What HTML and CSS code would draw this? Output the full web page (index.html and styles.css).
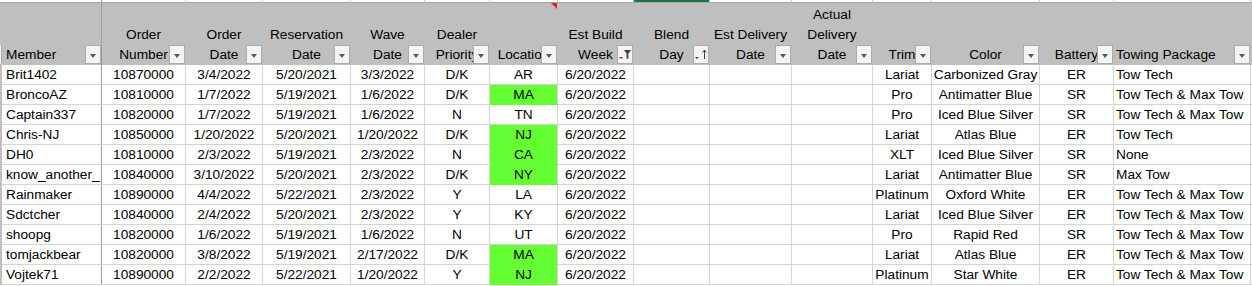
FILE: index.html
```html
<!DOCTYPE html>
<html>
<head>
<meta charset="utf-8">
<link rel="stylesheet" href="styles.css">
</head>
<body>
<div class="sheet">
  <div class="row top">
    <div class="c strip"></div><div class="c fz"></div><div class="c"></div><div class="c"></div><div class="c"></div><div class="c"></div><div class="c"></div><div class="c"></div><div class="c"></div><div class="c sel"></div><div class="c"></div><div class="c"></div><div class="c"></div><div class="c"></div><div class="c"></div><div class="c"></div><div class="c end"></div>
  </div>
  <div class="row head">
    <div class="c strip"><i class="stub"></i></div>
    <div class="c fz l"><div class="t">Member</div><i class="dd"></i></div>
    <div class="c"><div class="t">Order<br>Number</div><i class="dd"></i></div>
    <div class="c"><div class="t">Order<br>Date</div><i class="dd"></i></div>
    <div class="c"><div class="t">Reservation<br>Date</div><i class="dd"></i></div>
    <div class="c"><div class="t">Wave<br>Date</div><i class="dd"></i></div>
    <div class="c"><div class="t">Dealer<br>Priority</div><i class="dd"></i></div>
    <div class="c"><div class="t">Location</div><i class="dd"></i><i class="note"></i></div>
    <div class="c"><div class="t">Est Build<br>Week</div><i class="dd ic"><svg width="16" height="19" viewBox="0 0 16 19"><path d="M2 12h4l-2 2z" fill="#404040"/><path d="M7 5h7l-2.6 3.6v4.6l-1.8 1v-5.6z" fill="#404040"/></svg></i></div>
    <div class="c"><div class="t">Blend<br>Day</div><i class="dd ic"><svg width="16" height="19" viewBox="0 0 16 19"><path d="M2 12h4l-2 2z" fill="#404040"/><path d="M11.5 5v9" stroke="#404040" stroke-width="1"/><path d="M9.5 7.5l2-2.5 2 2.5" fill="none" stroke="#404040" stroke-width="1"/></svg></i></div>
    <div class="c"><div class="t">Est Delivery<br>Date</div><i class="dd"></i></div>
    <div class="c"><div class="t">Actual<br>Delivery<br>Date</div><i class="dd"></i></div>
    <div class="c"><div class="t">Trim</div><i class="dd"></i></div>
    <div class="c"><div class="t">Color</div><i class="dd"></i></div>
    <div class="c"><div class="t">Battery</div><i class="dd"></i></div>
    <div class="c l tw"><div class="t">Towing Package</div><i class="dd"></i></div>
    <div class="c end"></div>
  </div>

  <div class="row d"><div class="c strip"></div><div class="c fz l">Brit1402</div><div class="c">10870000</div><div class="c">3/4/2022</div><div class="c">5/20/2021</div><div class="c">3/3/2022</div><div class="c">D/K</div><div class="c">AR</div><div class="c">6/20/2022</div><div class="c"></div><div class="c"></div><div class="c"></div><div class="c">Lariat</div><div class="c">Carbonized Gray</div><div class="c">ER</div><div class="c l tw">Tow Tech</div><div class="c end"></div></div>
  <div class="row d"><div class="c strip"></div><div class="c fz l">BroncoAZ</div><div class="c">10810000</div><div class="c">1/7/2022</div><div class="c">5/19/2021</div><div class="c">1/6/2022</div><div class="c">D/K</div><div class="c g">MA</div><div class="c">6/20/2022</div><div class="c"></div><div class="c"></div><div class="c"></div><div class="c">Pro</div><div class="c">Antimatter Blue</div><div class="c">SR</div><div class="c l tw">Tow Tech &amp; Max Tow</div><div class="c end"></div></div>
  <div class="row d"><div class="c strip"></div><div class="c fz l">Captain337</div><div class="c">10820000</div><div class="c">1/7/2022</div><div class="c">5/19/2021</div><div class="c">1/6/2022</div><div class="c">N</div><div class="c">TN</div><div class="c">6/20/2022</div><div class="c"></div><div class="c"></div><div class="c"></div><div class="c">Pro</div><div class="c">Iced Blue Silver</div><div class="c">SR</div><div class="c l tw">Tow Tech &amp; Max Tow</div><div class="c end"></div></div>
  <div class="row d"><div class="c strip"></div><div class="c fz l">Chris-NJ</div><div class="c">10850000</div><div class="c">1/20/2022</div><div class="c">5/20/2021</div><div class="c">1/20/2022</div><div class="c">D/K</div><div class="c g">NJ</div><div class="c">6/20/2022</div><div class="c"></div><div class="c"></div><div class="c"></div><div class="c">Lariat</div><div class="c">Atlas Blue</div><div class="c">ER</div><div class="c l tw">Tow Tech</div><div class="c end"></div></div>
  <div class="row d"><div class="c strip"></div><div class="c fz l">DH0</div><div class="c">10810000</div><div class="c">2/3/2022</div><div class="c">5/19/2021</div><div class="c">2/3/2022</div><div class="c">N</div><div class="c g">CA</div><div class="c">6/20/2022</div><div class="c"></div><div class="c"></div><div class="c"></div><div class="c">XLT</div><div class="c">Iced Blue Silver</div><div class="c">SR</div><div class="c l tw">None</div><div class="c end"></div></div>
  <div class="row d"><div class="c strip"></div><div class="c fz l">know_another_</div><div class="c">10840000</div><div class="c">3/10/2022</div><div class="c">5/20/2021</div><div class="c">2/3/2022</div><div class="c">D/K</div><div class="c g">NY</div><div class="c">6/20/2022</div><div class="c"></div><div class="c"></div><div class="c"></div><div class="c">Lariat</div><div class="c">Antimatter Blue</div><div class="c">SR</div><div class="c l tw">Max Tow</div><div class="c end"></div></div>
  <div class="row d"><div class="c strip"></div><div class="c fz l">Rainmaker</div><div class="c">10890000</div><div class="c">4/4/2022</div><div class="c">5/22/2021</div><div class="c">2/3/2022</div><div class="c">Y</div><div class="c">LA</div><div class="c">6/20/2022</div><div class="c"></div><div class="c"></div><div class="c"></div><div class="c">Platinum</div><div class="c">Oxford White</div><div class="c">ER</div><div class="c l tw">Tow Tech &amp; Max Tow</div><div class="c end"></div></div>
  <div class="row d"><div class="c strip"></div><div class="c fz l">Sdctcher</div><div class="c">10840000</div><div class="c">2/4/2022</div><div class="c">5/20/2021</div><div class="c">2/3/2022</div><div class="c">Y</div><div class="c">KY</div><div class="c">6/20/2022</div><div class="c"></div><div class="c"></div><div class="c"></div><div class="c">Lariat</div><div class="c">Iced Blue Silver</div><div class="c">ER</div><div class="c l tw">Tow Tech &amp; Max Tow</div><div class="c end"></div></div>
  <div class="row d"><div class="c strip"></div><div class="c fz l">shoopg</div><div class="c">10820000</div><div class="c">1/6/2022</div><div class="c">5/19/2021</div><div class="c">1/6/2022</div><div class="c">N</div><div class="c">UT</div><div class="c">6/20/2022</div><div class="c"></div><div class="c"></div><div class="c"></div><div class="c">Pro</div><div class="c">Rapid Red</div><div class="c">SR</div><div class="c l tw">Tow Tech &amp; Max Tow</div><div class="c end"></div></div>
  <div class="row d"><div class="c strip"></div><div class="c fz l">tomjackbear</div><div class="c">10820000</div><div class="c">3/8/2022</div><div class="c">5/19/2021</div><div class="c">2/17/2022</div><div class="c">D/K</div><div class="c g">MA</div><div class="c">6/20/2022</div><div class="c"></div><div class="c"></div><div class="c"></div><div class="c">Lariat</div><div class="c">Atlas Blue</div><div class="c">ER</div><div class="c l tw">Tow Tech &amp; Max Tow</div><div class="c end"></div></div>
  <div class="row d"><div class="c strip"></div><div class="c fz l">Vojtek71</div><div class="c">10890000</div><div class="c">2/2/2022</div><div class="c">5/22/2021</div><div class="c">1/20/2022</div><div class="c">Y</div><div class="c g">NJ</div><div class="c">6/20/2022</div><div class="c"></div><div class="c"></div><div class="c"></div><div class="c">Platinum</div><div class="c">Star White</div><div class="c">ER</div><div class="c l tw">Tow Tech &amp; Max Tow</div><div class="c end"></div></div>
</div>
</body>
</html>
```

FILE: styles.css
```css
html, body {
  margin: 0;
  padding: 0;
  background: #ffffff;
}
body {
  font-family: "Liberation Sans", Arial, sans-serif;
  font-size: 13.7px;
  color: #000000;
  overflow: hidden;
}
.sheet {
  width: 1252px;
}
.row {
  display: grid;
  grid-template-columns: 2px 100px 84px 77px 88px 74px 65px 68px 76px 76px 82px 81px 59px 108px 74px 137px 1fr;
}
.c {
  box-sizing: border-box;
  min-width: 0;
}

/* top strip (bottom of previous row) */
.top {
  height: 3px;
}
.top .c {
  height: 3px;
  border-right: 1px solid #c6c6c6;
  border-bottom: 1px solid #a6a6a6;
}
.top .strip {
  border-right: none;
}
.top .fz {
  border-right-color: #9e9e9e;
}
.top .sel {
  box-shadow: inset 0 2px 0 #217346;
}
.top .end {
  border-right: none;
}

/* header row */
.head {
  height: 62px;
  background: #bfbfbf;
}
.head .c {
  position: relative;
  display: flex;
  align-items: flex-end;
  justify-content: center;
  text-align: center;
  line-height: 20px;
  white-space: nowrap;
  overflow: hidden;
  border-right: 1px solid #bfbfbf;
}
.head .l {
  justify-content: flex-start;
  text-align: left;
}
.head .fz {
  border-right-color: #9e9e9e;
  padding-left: 4px;
}
.head .tw {
  padding-left: 2px;
}
.head .strip {
  border-right: none;
}
.head .end {
  border-right: none;
  background: #bfbfbf;
}
.stub {
  position: absolute;
  left: 0;
  bottom: 1px;
  width: 1px;
  height: 19px;
  background: #f7f7f7;
  border-right: 1px solid #a6a6a6;
}
.dd {
  position: absolute;
  right: 0;
  bottom: 1px;
  width: 16px;
  height: 19px;
  box-sizing: border-box;
  background: #f4f4f4;
  border: 1px solid #ababab;
}
.dd::after {
  content: "";
  position: absolute;
  left: 4px;
  top: 8px;
  width: 0;
  height: 0;
  border-left: 3.5px solid transparent;
  border-right: 3.5px solid transparent;
  border-top: 4px solid #5a5a5a;
}
.dd.ic::after {
  display: none;
}
.dd.ic svg {
  position: absolute;
  left: -1px;
  top: -1px;
}
.note {
  position: absolute;
  right: 0;
  top: 0;
  width: 0;
  height: 0;
  border-top: 6px solid #e02020;
  border-left: 6px solid transparent;
}

/* data rows */
.d {
  height: 20px;
}
.d .c {
  height: 20px;
  line-height: 19px;
  text-align: center;
  white-space: nowrap;
  overflow: hidden;
  border-right: 1px solid #d4d4d4;
  border-bottom: 1px solid #d4d4d4;
}
.d .strip {
  background: #bfbfbf;
  border: none;
}
.d .l {
  text-align: left;
}
.d .fz {
  padding-left: 4px;
  border-right-color: #9e9e9e;
  text-overflow: clip;
}
.d .tw {
  padding-left: 2px;
}
.d .g {
  background: #66ff33;
  border-bottom-color: #66ff33;
}
.d .end {
  border-right: none;
}
```
